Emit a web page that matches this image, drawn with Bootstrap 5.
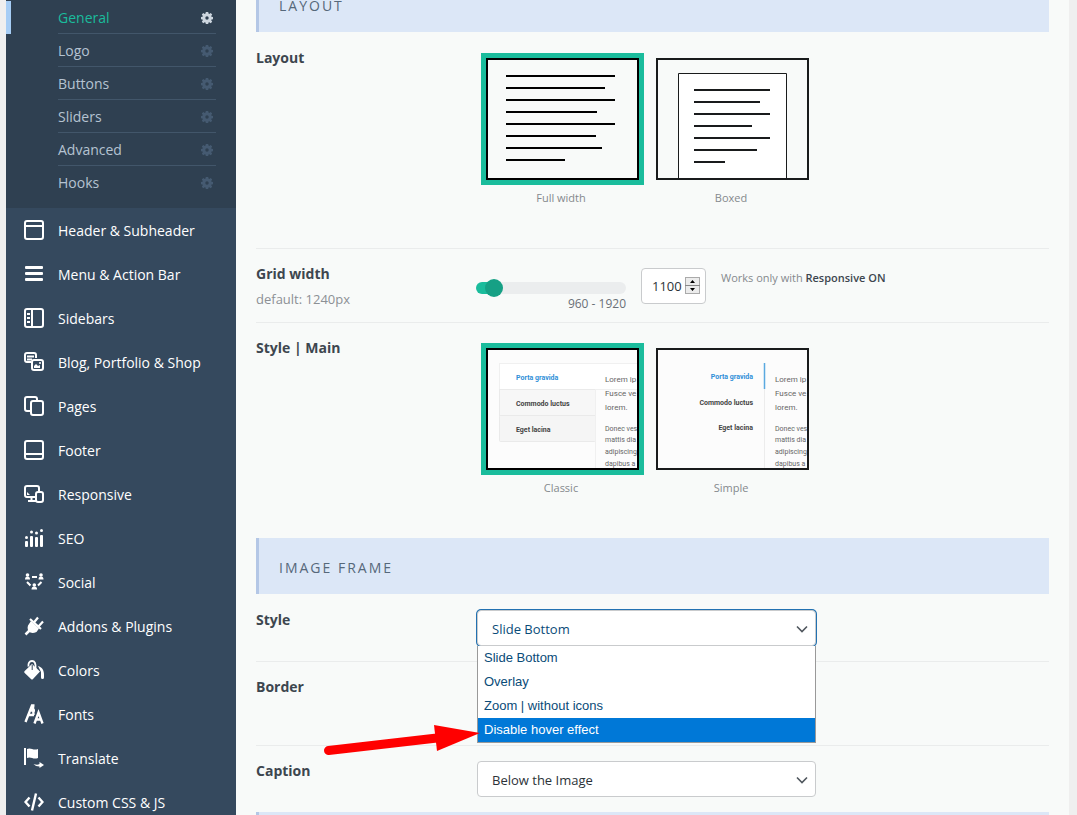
<!DOCTYPE html>
<html lang="en">
<head>
<meta charset="utf-8">
<meta name="viewport" content="width=device-width, initial-scale=1">
<title>Theme Options</title>
<link rel="stylesheet" href="https://cdn.jsdelivr.net/npm/bootstrap@5.3.0/dist/css/bootstrap.min.css">
<style>
body { background: #efefef; font-family: "Open Sans", sans-serif; font-size: 14px; line-height: 20px; color: #3d464f; }
.panel { padding: 0 8px 0 6px; }
.side { width: 230px; background: #35495e; }
.side a { text-decoration: none; padding-top: 2px; }
/* sub menu */
.sub { background: #2f4051; padding: 1px 0 9px; }
.sub li { padding: 0 20px 0 52px; }
.sub li.active { padding-left: 47px; border-left: 5px solid #a6cdf5; }
.sub a { height: 33px; color: #b5c3d1; border-bottom: 1px solid #42566a; }
.sub li:last-child a { border-color: transparent; }
.sub .active a { color: #1abc9c; }
.sub svg { color: #455a71; margin-right: 3px; }
.sub .active svg { color: #cdd6df; }
.menu a { height: 44px; padding-left: 18px; gap: 14px; color: #fff; }
.menu svg { margin-bottom: 2px; }
/* content */
.content { background: #f8faf9; padding: 0 20px; }
.scrolled { margin-top: -24px; }
.strip { height: 56px; background: #dce7f7; border-left: 3px solid #b4c7e6; padding: 5px 20px 0; font-size: 14px; letter-spacing: 2px; color: #56687a; font-weight: 400; }
.opt { border-top: 1px solid #eaecec; padding: 15px 0; }
.strip + .opt { border-color: transparent; }
.opt-name { width: 220px; }
.opt-name label, .opt-name .title { font-weight: 700; font-size: 14px; line-height: 20px; }
.opt-name p { color: #8c9095; margin-top: 5px; font-size: 13px; }
.opt-tall { min-height: 216px; }
.opt-mid { min-height: 84px; }
.opt-slide { padding-bottom: 10px; }
.choices { gap: 7px; padding: 5px 0 0 5px; }
.choice { border: 5px solid transparent; }
input:checked + .choice { border-color: #1abc9c; }
.cap { font-size: 11px; line-height: 16px; color: #85898d; margin-top: 5px; padding-right: 3px; }
.slide-box { width: 150px; margin-top: 15px; }
.slide { appearance: none; display: block; width: 150px; height: 18px; margin: 0; background: none; }
.slide::-webkit-slider-runnable-track { height: 12px; border-radius: 6px; background: linear-gradient(90deg, #1abc9c 18px, #ebedee 18px); }
.slide::-webkit-slider-thumb { appearance: none; width: 18px; height: 18px; margin-top: -3px; border-radius: 50%; background: #16a085; }
.range-text { font-size: 12px; line-height: 16px; color: #6a7077; margin-top: -1px; }
.num { width: 65px; height: 36px; margin: 4px 0 0 15px; }
.num input { width: 100%; height: 100%; border: 1px solid #c9cbcd; border-radius: 4px; background: #fff; padding: 0 0 0 10px; font-size: 13px; color: #2c3338; appearance: textfield; }
.num input::-webkit-inner-spin-button { display: none; }
.num svg { right: 6px; top: 9px; }
.help { font-size: 11px; line-height: 16px; color: #85898d; margin: 6px 0 0 15px; }
.help b { color: #3d464f; font-weight: 600; }
.pick { width: 339px; margin-left: 1px; }
.pick select { appearance: none; width: 100%; height: 36px; border: 1px solid #c9cbcd; border-radius: 4px; padding: 2px 14px 0; font-size: 13px; color: #2c3338; background: #fff; display: block; }
.pick select.open { color: #0a4b78; box-shadow: 0 0 0 1px #2271b1; }
.pick .chev { right: 8px; top: 14px; pointer-events: none; }
.drop { top: 36px; left: 0; right: 0; z-index: 2; background: #fff; border: 1px solid #999; border-top-width: 0; font-family: "Liberation Sans", sans-serif; font-size: 13px; color: #0a4b78; }
.drop li { height: 24px; line-height: 24px; padding-left: 6px; }
.drop li.on { background: #0078d7; color: #fff; }
.pointer { right: 100%; top: 110px; margin-right: -6px; z-index: 3; }
.thumb-text { font-family: Roboto, sans-serif; font-size: 7px; fill: #666; }
.thumb-lead { font-size: 8px; }
.thumb-bold { font-weight: 700; fill: #444; }
.thumb-blue { font-weight: 700; fill: #2f8fd8; }
</style>
</head>
<body>
<svg width="0" height="0" class="position-absolute" aria-hidden="true">
  <symbol id="gear" viewBox="0 0 12 12"><path fill="currentColor" fill-rule="evenodd" d="M4.800 0h2.400l.3 1.600.8.4 1.400-1 1.500 1.500-1 1.400.3.8 1.500.3v2.200l-1.500.3-.3.8 1 1.400-1.500 1.500-1.400-1-.8.3-.3 1.500H4.800l-.3-1.500-.8-.3-1.400 1L.8 9.700l1-1.400-.3-.8L0 7.200V5l1.500-.3.3-.8-1-1.400L2.300 1l1.400 1 .8-.4zM6 4.300a1.700 1.700 0 1 0 0 3.400 1.700 1.700 0 0 0 0-3.400z"/></symbol>
  <symbol id="chev" viewBox="0 0 12 10"><path d="M1 2.500l5 5 5-5" fill="none" stroke="#50575e" stroke-width="1.600"/></symbol>
  <symbol id="lorem" viewBox="0 0 153 122">
    <g class="thumb-text"><text class="thumb-lead" x="119" y="34">Lorem ip</text><text class="thumb-lead" x="119" y="48">Fusce ve</text><text class="thumb-lead" x="119" y="62">lorem.</text><text x="119" y="83">Donec ves</text><text x="119" y="94">mattis dia</text><text x="119" y="106">adipiscing</text><text x="119" y="118">dapibus a</text></g>
  </symbol>
</svg>

<div class="panel d-flex vh-100 overflow-hidden">
  <nav class="side flex-shrink-0" aria-label="Theme options">
    <ul class="sub list-unstyled mb-0">
      <li class="active"><a href="#" class="d-flex align-items-center justify-content-between">General<svg width="12" height="12"><use href="#gear"/></svg></a></li>
      <li><a href="#" class="d-flex align-items-center justify-content-between">Logo<svg width="12" height="12"><use href="#gear"/></svg></a></li>
      <li><a href="#" class="d-flex align-items-center justify-content-between">Buttons<svg width="12" height="12"><use href="#gear"/></svg></a></li>
      <li><a href="#" class="d-flex align-items-center justify-content-between">Sliders<svg width="12" height="12"><use href="#gear"/></svg></a></li>
      <li><a href="#" class="d-flex align-items-center justify-content-between">Advanced<svg width="12" height="12"><use href="#gear"/></svg></a></li>
      <li><a href="#" class="d-flex align-items-center justify-content-between">Hooks<svg width="12" height="12"><use href="#gear"/></svg></a></li>
    </ul>
    <ul class="menu list-unstyled mb-0">
      <li><a href="#" class="d-flex align-items-center"><svg width="20" height="20" fill="none" stroke="#fff" stroke-width="2"><rect x="1" y="1" width="18" height="18" rx="2"/><path d="M1 6h18"/></svg>Header &amp; Subheader</a></li>
      <li><a href="#" class="d-flex align-items-center"><svg width="20" height="20" fill="#fff"><rect x="1" y="2" width="18" height="3" rx="1"/><rect x="1" y="8" width="18" height="3" rx="1"/><rect x="1" y="14" width="18" height="3" rx="1"/></svg>Menu &amp; Action Bar</a></li>
      <li><a href="#" class="d-flex align-items-center"><svg width="20" height="20" fill="none" stroke="#fff" stroke-width="2"><rect x="1" y="1" width="18" height="18" rx="2"/><path d="M8 1v18M3 6h3M3 10h3M3 14h3"/></svg>Sidebars</a></li>
      <li><a href="#" class="d-flex align-items-center"><svg width="20" height="20" fill="none" stroke="#fff" stroke-width="2"><path d="M7 10H3a2 2 0 0 1-2-2V3a2 2 0 0 1 2-2h7a2 2 0 0 1 2 2v3M3 4.500h7M3 7.500h5" /><rect x="8" y="8" width="11" height="10" rx="2"/><path d="M10 16v-2l2-2 2 2 2-1v3z" fill="#fff" stroke="none"/><circle cx="16" cy="11" r="1" fill="#fff" stroke="none"/></svg>Blog, Portfolio &amp; Shop</a></li>
      <li><a href="#" class="d-flex align-items-center"><svg width="20" height="20" fill="none" stroke="#fff" stroke-width="2"><path d="M7 15H3a2 2 0 0 1-2-2V3a2 2 0 0 1 2-2h8a2 2 0 0 1 2 2v2"/><rect x="7" y="5" width="12" height="14" rx="2"/></svg>Pages</a></li>
      <li><a href="#" class="d-flex align-items-center"><svg width="20" height="20" fill="none" stroke="#fff" stroke-width="2"><rect x="1" y="1" width="18" height="18" rx="2"/><path d="M1 14h18"/></svg>Footer</a></li>
      <li><a href="#" class="d-flex align-items-center"><svg width="20" height="20" fill="none" stroke="#fff" stroke-width="2"><path d="M11 13H3a2 2 0 0 1-2-2V4a2 2 0 0 1 2-2h10a2 2 0 0 1 2 2v3M4 17h8M7.500 13v4"/><rect x="12" y="8" width="7" height="10" rx="2"/><path d="M3 8l3 3H3z" fill="#fff" stroke="none"/></svg>Responsive</a></li>
      <li><a href="#" class="d-flex align-items-center"><svg width="20" height="20" fill="#fff"><rect x="1" y="13" width="3" height="6" rx="1"/><rect x="6" y="8" width="3" height="11" rx="1"/><rect x="11" y="9" width="3" height="10" rx="1"/><rect x="16" y="7" width="3" height="12" rx="1"/><circle cx="2.500" cy="9.500" r="1.500"/><circle cx="7.500" cy="4" r="1.500"/><circle cx="12.500" cy="5" r="1.500"/><circle cx="17.500" cy="2.500" r="1.500"/></svg>SEO</a></li>
      <li><a href="#" class="d-flex align-items-center"><svg width="20" height="20" fill="#fff"><circle cx="3.500" cy="3" r="1.800"/><path d="M1 7.500a2.500 3 0 0 1 5 0z"/><circle cx="17" cy="3" r="1.800"/><path d="M14.500 7.500a2.500 3 0 0 1 5 0z"/><circle cx="10.300" cy="13" r="1.800"/><path d="M7.500 17.500a2.800 3 0 0 1 5.600 0z"/><path d="M8 5h5M3 10l3.500 3.500M17.500 10L14 13.500" stroke="#fff" stroke-width="2"/></svg>Social</a></li>
      <li><a href="#" class="d-flex align-items-center"><svg width="20" height="20" fill="none" stroke="#fff"><path d="M1.500 18.500l4-4" stroke-width="2.500"/><path d="M4 9.500c-1 3 0 5 1.200 6.200S9 17.500 12.500 16L15 12.500 7 5z" fill="#fff" stroke="none"/><path d="M6 3l11 10M9.500 7l4.500-5.500M14 11l5-5.500" stroke-width="2.200"/></svg>Addons &amp; Plugins</a></li>
      <li><a href="#" class="d-flex align-items-center"><svg width="20" height="20" fill="#fff"><path d="M8 4l8 7.500-7 7.500q-1 1-2 0L.7 13q-1-1 0-2z"/><path d="M4.500 6.500C4 3 5.500 1 8 1s4 2 3.500 8" fill="none" stroke="#fff" stroke-width="1.800"/><path d="M8.200 5v5" stroke="#35495e"/><path d="M14 6c4 1 6 4 6 9v2.500a1.500 1.500 0 0 1-3 0V12z"/></svg>Colors</a></li>
      <li><a href="#" class="d-flex align-items-center"><svg width="20" height="20" fill="none" stroke="#fff" stroke-width="2.400"><path d="M1.500 18L8 1.500h2.500M9 2l.5 9M5 11h5M7 6.500h4M10.500 19.500l4-11 4 11M12 15.500h5.500"/></svg>Fonts</a></li>
      <li><a href="#" class="d-flex align-items-center"><svg width="20" height="20" fill="#fff"><rect x="0" y="0" width="2" height="17"/><path d="M3 1c4-2 6 2 11 0v9c-5 2-7-2-11 0z"/><path d="M9.500 16q4 1.500 6 0v-2l4.500 3-4.500 3v-1.500q-4 0-6-2.500z"/></svg>Translate</a></li>
      <li><a href="#" class="d-flex align-items-center"><svg width="20" height="20" fill="none" stroke="#fff" stroke-width="2.400"><path d="M5.500 5.500L1.500 10l4 4.500M14.500 5.500l4 4.500-4 4.500M12 1.500L8 18.500"/></svg>Custom CSS &amp; JS</a></li>
    </ul>
  </nav>

  <main class="content flex-grow-1">
    <h2 class="strip scrolled d-flex align-items-center mb-0">LAYOUT</h2>
    <section class="opt opt-tall d-flex">
      <div class="opt-name flex-shrink-0"><div class="title">Layout</div></div>
      <div class="choices d-flex">
        <label class="text-center"><input class="visually-hidden" type="radio" name="layout" checked>
          <span class="choice d-block"><svg class="d-block" width="153" height="122"><rect x="1" y="1" width="151" height="120" fill="#f8faf9" stroke="#000" stroke-width="2"/><path d="M20 18h109M20 30h99M20 42h109M20 54h91M20 66h109M20 78h90M20 90h96M20 102h59" stroke="#000" stroke-width="2"/></svg></span>
          <span class="cap d-block">Full width</span></label>
        <label class="text-center"><input class="visually-hidden" type="radio" name="layout">
          <span class="choice d-block"><svg class="d-block" width="153" height="122"><path d="M22.500 121V15.500h108V121" fill="#fff" stroke="#191b1c"/><rect x="1" y="1" width="151" height="120" fill="none" stroke="#191b1c" stroke-width="2"/><path d="M38 32h76M38 44h66M38 56h76M38 68h58M38 80h76M38 92h63M38 104h31" stroke="#191b1c" stroke-width="2"/></svg></span>
          <span class="cap d-block">Boxed</span></label>
      </div>
    </section>
    <section class="opt opt-slide d-flex">
      <div class="opt-name flex-shrink-0"><label class="d-block" for="grid">Grid width</label><p class="mb-0">default: 1240px</p></div>
      <div class="slide-box flex-shrink-0"><input class="slide" type="range" min="960" max="1920" value="1026" aria-label="Grid width"><div class="range-text text-end">960 - 1920</div></div>
      <div class="num position-relative flex-shrink-0"><input type="number" id="grid" value="1100">
        <svg class="position-absolute" width="15" height="17"><rect x="0.500" y="0.500" width="14" height="16" fill="#ececec" stroke="#aaa"/><path d="M0 8.500h15" stroke="#888"/><path d="M5 6h5L7.500 3zM5 11h5l-2.500 3z"/></svg></div>
      <div class="help">Works only with <b>Responsive ON</b></div>
    </section>
    <section class="opt opt-tall d-flex">
      <div class="opt-name flex-shrink-0"><div class="title">Style | Main</div></div>
      <div class="choices d-flex">
        <label class="text-center"><input class="visually-hidden" type="radio" name="main" checked>
          <span class="choice d-block"><svg class="d-block" width="153" height="122"><rect width="153" height="122" fill="#fcfcfc"/><rect x="13.500" y="15.500" width="145" height="26" fill="#fff" stroke="#f0f0f0"/><rect x="13.500" y="41.500" width="96" height="26" fill="#f7f7f7" stroke="#eaeaea"/><rect x="13.500" y="67.500" width="96" height="26" rx="1" fill="#f5f5f5" stroke="#eaeaea"/><path d="M109.500 41v80" stroke="#f0f0f0"/><g class="thumb-text"><text class="thumb-blue" x="30" y="32">Porta gravida</text><text class="thumb-bold" x="30" y="58">Commodo luctus</text><text class="thumb-bold" x="30" y="84">Eget lacina</text></g><use href="#lorem" width="153" height="122"/><rect x="1" y="1" width="151" height="120" fill="none" stroke="#000" stroke-width="2"/></svg></span>
          <span class="cap d-block">Classic</span></label>
        <label class="text-center"><input class="visually-hidden" type="radio" name="main">
          <span class="choice d-block"><svg class="d-block" width="153" height="122"><rect width="153" height="122" fill="#fcfcfc"/><path d="M108.500 41v80" stroke="#ececec"/><path d="M108.500 15v26" stroke="#5aa9e0" stroke-width="1.500"/><g class="thumb-text" text-anchor="end"><text class="thumb-blue" x="97" y="31">Porta gravida</text><text class="thumb-bold" x="97" y="57">Commodo luctus</text><text class="thumb-bold" x="97" y="82">Eget lacina</text></g><use href="#lorem" width="153" height="122"/><rect x="1" y="1" width="151" height="120" fill="none" stroke="#191b1c" stroke-width="2"/></svg></span>
          <span class="cap d-block">Simple</span></label>
      </div>
    </section>

    <h2 class="strip d-flex align-items-center mb-0">IMAGE FRAME</h2>
    <section class="opt d-flex">
      <div class="opt-name flex-shrink-0"><label for="frame">Style</label></div>
      <div class="pick position-relative">
        <select id="frame" class="open"><option>Slide Bottom</option><option>Overlay</option><option>Zoom | without icons</option><option>Disable hover effect</option></select>
        <svg class="chev position-absolute" width="12" height="10"><use href="#chev"/></svg>
        <ul class="drop list-unstyled mb-0 position-absolute" role="listbox" aria-label="Style"><li role="option">Slide Bottom</li><li role="option">Overlay</li><li role="option">Zoom | without icons</li><li role="option" class="on">Disable hover effect</li></ul>
        <svg class="pointer position-absolute" width="160" height="36" aria-hidden="true"><path d="M5.500 30.500L114 18" stroke="#f00" stroke-width="9" stroke-linecap="round"/><path d="M111 5l46 8-43 18z" fill="#f00"/></svg>
      </div>
    </section>
    <section class="opt opt-mid"><div class="opt-name"><div class="title">Border</div></div></section>
    <section class="opt d-flex">
      <div class="opt-name flex-shrink-0"><label for="caption">Caption</label></div>
      <div class="pick position-relative">
        <select id="caption"><option>Below the Image</option></select>
        <svg class="chev position-absolute" width="12" height="10"><use href="#chev"/></svg>
      </div>
    </section>
    <div class="strip"></div>
  </main>
</div>
<script src="https://cdn.jsdelivr.net/npm/bootstrap@5.3.0/dist/js/bootstrap.bundle.min.js"></script>
</body>
</html>
